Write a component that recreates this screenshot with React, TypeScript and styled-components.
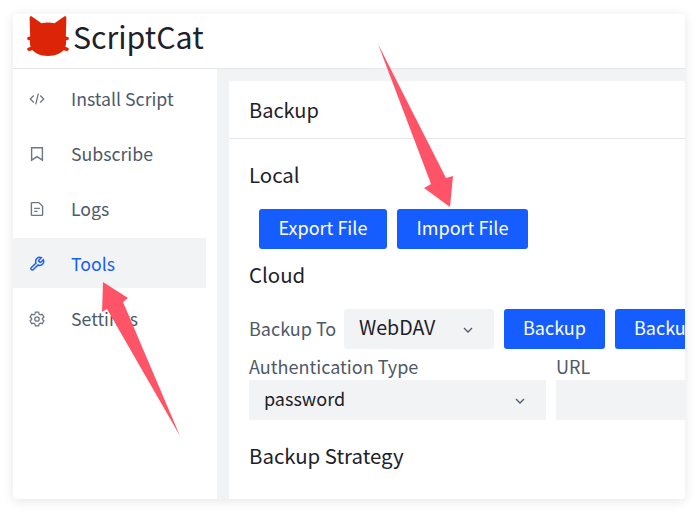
import React from "react";
import styled, { createGlobalStyle } from "styled-components";

const GlobalStyle = createGlobalStyle`
  html, body {
    margin: 0;
    padding: 0;
    background: #fff;
    font-family: "Noto Sans CJK SC", "Noto Sans", sans-serif;
  }
`;

const Page = styled.div`
  position: relative;
  width: 698px;
  height: 512px;
  padding: 14px 13px 13px;
  box-sizing: border-box;
  overflow: hidden;
`;

const Window = styled.div`
  width: 672px;
  height: 485px;
  display: flex;
  flex-direction: column;
  background: #fff;
  border-radius: 4px;
  box-shadow: 0 2px 12px rgba(0, 0, 0, 0.1);
  overflow: hidden;
`;

const Header = styled.header`
  height: 52px;
  flex: none;
  display: flex;
  align-items: flex-start;
  gap: 4px;
  padding: 2px 0 0 14px;
  border-bottom: 1px solid #e5e6eb;
`;

const Brand = styled.span`
  font-size: 30.3px;
  line-height: 40px;
  color: #1d2129;
`;

const Body = styled.div`
  flex: 1;
  display: flex;
  min-height: 0;
`;

const Sidebar = styled.nav`
  width: 204px;
  flex: none;
  padding-top: 4px;
  box-sizing: border-box;
`;

const MenuItem = styled.div<{ $active?: boolean }>`
  width: 193px;
  height: 50px;
  margin-bottom: 5px;
  display: flex;
  align-items: center;
  gap: 26px;
  padding-left: 16px;
  box-sizing: border-box;
  font-size: 17.7px;
  color: ${(p) => (p.$active ? "#165dff" : "#4e5969")};
  background: ${(p) => (p.$active ? "#f2f3f5" : "transparent")};

  svg {
    flex: none;
    margin-top: 2px;
    color: ${(p) => (p.$active ? "#165dff" : "#6b7785")};
  }
`;

const Content = styled.main`
  flex: 1;
  min-width: 0;
  padding: 12px 0 0 12px;
  background: #f2f3f5;
`;

const Card = styled.section`
  height: 100%;
  background: #fff;
  overflow: hidden;
`;

const CardTitle = styled.div`
  height: 57px;
  display: flex;
  align-items: center;
  padding-left: 20px;
  font-size: 20px;
  color: #1d2129;
  border-bottom: 1px solid #e5e6eb;
`;

const CardBody = styled.div`
  padding: 21px 0 0 20px;
`;

const Heading = styled.div<{ $gap?: number }>`
  font-size: 20.4px;
  line-height: 28px;
  color: #1d2129;
  margin-top: ${(p) => p.$gap ?? 0}px;
`;

const Row = styled.div<{ $indent?: number; $top?: number }>`
  display: flex;
  align-items: center;
  gap: 10px;
  margin-top: ${(p) => p.$top ?? 21}px;
  margin-left: ${(p) => p.$indent ?? 0}px;
  white-space: nowrap;
`;

const Button = styled.button<{ $width: number }>`
  flex: none;
  width: ${(p) => p.$width}px;
  height: 40px;
  padding: 0 0 5px;
  border: 0;
  border-radius: 3px;
  background: #165dff;
  color: #fff;
  font: inherit;
  font-size: 18px;
`;

const Label = styled.span`
  font-size: 18px;
  color: #4e5969;
`;

const InlineLabel = styled(Label)`
  width: 85px;
  flex: none;
  padding-bottom: 3px;
`;

const Select = styled.div<{ $width: number; $rounded?: boolean; $size?: number }>`
  flex: none;
  width: ${(p) => p.$width}px;
  height: 40px;
  display: flex;
  align-items: center;
  justify-content: space-between;
  padding: 0 20px 5px 15px;
  box-sizing: border-box;
  background: #f2f3f5;
  border-radius: ${(p) => (p.$rounded ? 3 : 0)}px;
  font-size: ${(p) => p.$size ?? 18}px;
  color: #1d2129;

  svg {
    margin-top: 6px;
  }
`;

const Fields = styled.div`
  display: flex;
  gap: 10px;
  margin-top: 4px;
  white-space: nowrap;
`;

const Field = styled.div`
  flex: none;
  display: flex;
  flex-direction: column;
`;

const FieldLabel = styled(Label)`
  line-height: 27px;
`;

const Arrow = styled.svg`
  position: absolute;
  left: 0;
  top: 0;
  pointer-events: none;
`;

const Icon: React.FC<{ children: React.ReactNode }> = ({ children }) => (
  <svg width="16" height="16" viewBox="0 0 16 16" fill="none" stroke="currentColor" strokeWidth="1.3">
    {children}
  </svg>
);

const Chevron = () => (
  <svg width="12" height="12" viewBox="0 0 12 12" fill="none" stroke="#4e5969" strokeWidth="1.3">
    <path d="M2 4l4 4 4-4" />
  </svg>
);

const Logo = () => (
  <svg width="42" height="40" viewBox="0 0 42 40">
    <path
      fill="#dc2406"
      d="M2.6 2C2.6 .4 3.8 -.2 5.2 .8L14.5 7.2C19 6.4 23 6.4 27.5 7.2L36.8 .8C38.2 -.2 39.4 .4 39.4 2L38.8 21C39.4 25 39.2 28 38.4 31C36 37 28.6 40 21 40C13.4 40 6 37 3.6 31C2.8 28 2.6 25 3.2 21Z"
    />
    <path
      stroke="#dc2406"
      strokeWidth="3.6"
      strokeLinecap="round"
      d="M2 22.5L8 21.5M40 22.5L34 21.5M2 33.2L9 31.5M40 33.2L33 31.5"
    />
  </svg>
);

const App: React.FC = () => {
  return (
    <Page>
      <GlobalStyle />
      <Window>
        <Header>
          <Logo />
          <Brand>ScriptCat</Brand>
        </Header>
        <Body>
          <Sidebar>
            <MenuItem>
              <Icon>
                <path d="M4.8 4.5L1.3 8l3.5 3.5M11.2 4.5L14.7 8l-3.5 3.5M9.3 2.7L6.7 13.3" />
              </Icon>
              Install Script
            </MenuItem>
            <MenuItem>
              <Icon>
                <path strokeWidth="1.4" d="M2.6 1.8h10.8v12.4L8 10.6l-5.4 3.6z" />
              </Icon>
              Subscribe
            </MenuItem>
            <MenuItem>
              <Icon>
                <path strokeWidth="1.4" d="M2.4 2.4a.8.8 0 0 1 .8-.8h6.6l3.8 3.6v8.4a.8.8 0 0 1-.8.8H3.2a.8.8 0 0 1-.8-.8z" />
                <path strokeWidth="1.4" d="M5.2 7.4h5.6M5.2 10.4h3.4" />
              </Icon>
              Logs
            </MenuItem>
            <MenuItem $active>
              <svg width="16" height="16" viewBox="0 0 24 24" fill="none" stroke="currentColor" strokeWidth="2.2">
                <path d="M14.7 6.3a1 1 0 0 0 0 1.4l1.6 1.6a1 1 0 0 0 1.4 0l3.77-3.77a6 6 0 0 1-7.94 7.94l-6.91 6.91a2.12 2.12 0 0 1-3-3l6.91-6.91a6 6 0 0 1 7.94-7.94l-3.76 3.76z" />
              </svg>
              Tools
            </MenuItem>
            <MenuItem>
              <Icon>
                <path d="M6.4 1.2h3.2l.5 2 1.2.7 2-.6 1.6 2.8-1.5 1.4v1l1.5 1.4-1.6 2.8-2-.6-1.2.7-.5 2H6.4l-.5-2-1.2-.7-2 .6-1.6-2.8 1.5-1.4v-1L1.1 6.1l1.6-2.8 2 .6 1.2-.7z" />
                <circle cx="8" cy="8" r="2.2" />
              </Icon>
              Settings
            </MenuItem>
          </Sidebar>
          <Content>
            <Card>
              <CardTitle>Backup</CardTitle>
              <CardBody>
                <Heading>Local</Heading>
                <Row $indent={10}>
                  <Button $width={128}>Export File</Button>
                  <Button $width={131}>Import File</Button>
                </Row>
                <Heading $gap={11}>Cloud</Heading>
                <Row>
                  <InlineLabel>Backup To</InlineLabel>
                  <Select $width={150} $rounded $size={19.6}>
                    WebDAV
                    <Chevron />
                  </Select>
                  <Button $width={101}>Backup</Button>
                  <Button $width={101}>Backup</Button>
                </Row>
                <Fields>
                  <Field>
                    <FieldLabel>Authentication Type</FieldLabel>
                    <Select $width={297}>
                      password
                      <Chevron />
                    </Select>
                  </Field>
                  <Field>
                    <FieldLabel>URL</FieldLabel>
                    <Select $width={297} />
                  </Field>
                </Fields>
                <Heading $gap={21}>Backup Strategy</Heading>
              </CardBody>
            </Card>
          </Content>
        </Body>
      </Window>
      <Arrow width="698" height="512" viewBox="0 0 698 512">
        <polygon fill="#ff5468" points="378,44 446,178 453,176 450,207 424,188 431,184" />
        <polygon fill="#ff5468" points="103,282 128,298 123,302 180,436 107,309 102,312" />
      </Arrow>
    </Page>
  );
};

export default App;
